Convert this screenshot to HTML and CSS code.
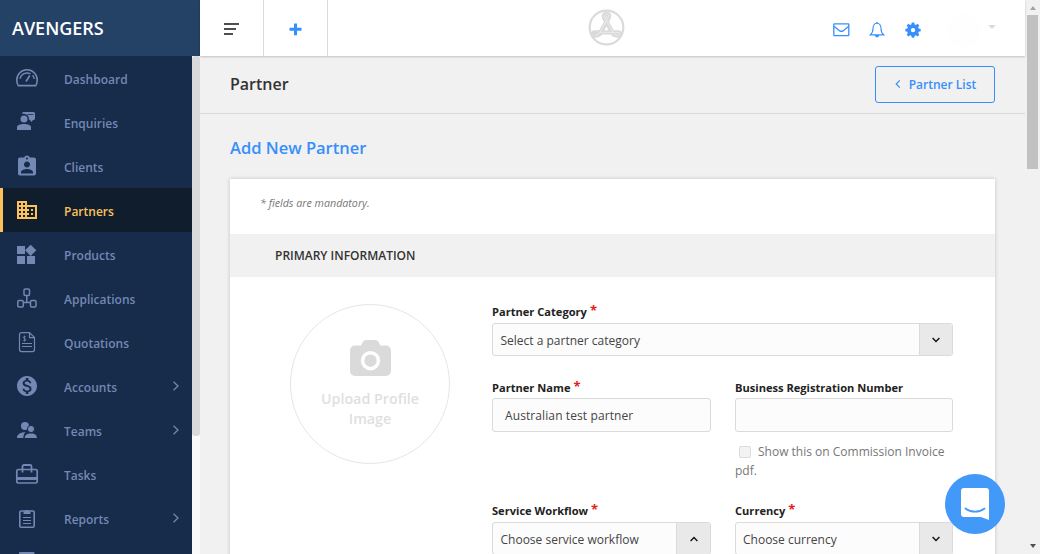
FILE: index.html
```html
<!DOCTYPE html>
<html lang="en">
<head>
<meta charset="utf-8">
<title>Add New Partner</title>
<link rel="stylesheet" href="styles.css">
</head>
<body>
<div class="app">
  <aside class="sidebar">
    <div class="brand">AVENGERS</div>
    <div class="side-body">
      <nav class="nav">
        <a class="nav-item"><svg class="ico line" viewBox="0 0 24 24"><path d="M3.200 19.600C2.200 18.200 1.800 16 1.800 14A10.200 10.200 0 0 1 22.200 14c0 2-.4 4.200-1.400 5.600z" stroke-width="1.600"/><path d="M5 12.800a7.300 7.300 0 0 1 10.500-5M17.600 9.200A7.300 7.300 0 0 1 19.200 13" stroke-width="1.400"/><path d="M11 15.500L14.800 9.500" stroke-width="1.700"/></svg><span>Dashboard</span></a>
        <a class="nav-item"><svg class="ico" viewBox="0 0 24 24"><circle cx="9" cy="9" r="3.500"/><path d="M2 20v-2.600C2 14.800 5.500 14 9 14s7 .8 7 3.400V20z"/><path d="M7.500 2h11a1.500 1.500 0 0 1 1.500 1.500v5A1.500 1.500 0 0 1 18.500 10H18l-1.500 2L14.800 9.800H13.800A5 5 0 0 0 7.500 4z"/><path class="cut" d="M12.500 4.500h6"/></svg><span>Enquiries</span></a>
        <a class="nav-item"><svg class="ico" viewBox="0 -.5 24 24"><path d="M19 3h-4.180C14.400 1.840 13.300 1 12 1s-2.400.84-2.820 2H5c-1.100 0-2 .9-2 2v14c0 1.100.9 2 2 2h14c1.100 0 2-.9 2-2V5c0-1.100-.9-2-2-2zm-7 0c.55 0 1 .45 1 1s-.45 1-1 1-1-.45-1-1 .45-1 1-1zm0 4c1.660 0 3 1.340 3 3s-1.340 3-3 3-3-1.340-3-3 1.340-3 3-3zm6 12H6v-1.400c0-2 4-3.100 6-3.100s6 1.100 6 3.100V19z"/></svg><span>Clients</span></a>
        <a class="nav-item active"><svg class="ico" viewBox="0 0 24 24"><path d="M12 7V3H2v18h20V7H12zM6 19H4v-2h2v2zm0-4H4v-2h2v2zm0-4H4V9h2v2zm0-4H4V5h2v2zm4 12H8v-2h2v2zm0-4H8v-2h2v2zm0-4H8V9h2v2zm0-4H8V5h2v2zm10 12h-8v-2h2v-2h-2v-2h2v-2h-2V9h8v10zm-2-8h-2v2h2v-2zm0 4h-2v2h2v-2z"/></svg><span>Partners</span></a>
        <a class="nav-item"><svg class="ico" viewBox="1 -1 24 24"><path d="M13 13v8h8v-8h-8zM3 21h8v-8H3v8zM3 3v8h8V3H3zm13.660-1.310L11 7.340 16.660 13l5.660-5.660-5.660-5.650z"/></svg><span>Products</span></a>
        <a class="nav-item"><svg class="ico line" viewBox="0 0 24 24"><g stroke-width="1.500"><rect x="9" y="3" width="5.500" height="6.500" rx="1.200"/><rect x="2.800" y="14.500" width="5.500" height="6.500" rx="1.200"/><rect x="15.500" y="14.500" width="5.500" height="6.500" rx="1.200"/><path d="M11.800 9.500v7M8.300 16.500h7.200"/></g></svg><span>Applications</span></a>
        <a class="nav-item"><svg class="ico line" viewBox="0 0 24 24"><path d="M14.500 2.600H6.500a2 2 0 0 0-2 2v15a2 2 0 0 0 2 2h11a2 2 0 0 0 2-2V7.500zv5h5M7 13.500h10M7 16.500h10" stroke-width="1.200"/><path d="M10.800 6.800C10.300 6.200 8.300 6.200 8.200 7.500s2.700.9 2.700 2.200-2.300 1.400-2.900.6M9.500 5.600v6" stroke-width=".8"/></svg><span>Quotations</span></a>
        <a class="nav-item"><svg class="ico" viewBox="0 0 24 24"><path d="M12 2C6.480 2 2 6.480 2 12s4.480 10 10 10 10-4.480 10-10S17.520 2 12 2zm1.410 16.090V20h-2.670v-1.930c-1.710-.36-3.160-1.460-3.270-3.400h1.960c.1 1.050.82 1.870 2.650 1.870 1.960 0 2.400-.98 2.400-1.590 0-.83-.44-1.610-2.670-2.140-2.480-.6-4.180-1.620-4.180-3.670 0-1.720 1.390-2.840 3.110-3.210V4h2.670v1.950c1.860.45 2.790 1.860 2.850 3.390H14.300c-.05-1.110-.64-1.870-2.220-1.870-1.500 0-2.400.68-2.400 1.640 0 .84.65 1.390 2.670 1.910s4.180 1.390 4.180 3.910c-.01 1.830-1.380 2.830-3.120 3.160z"/></svg><span>Accounts</span><svg class="caret" viewBox="0 0 8 10"><path d="M1.500.8L6 5 1.500 9.200"/></svg></a>
        <a class="nav-item"><svg class="ico" viewBox="0 0 24 24"><circle cx="10" cy="8" r="4"/><circle class="ring" cx="16" cy="11" r="3.600"/><path d="M2 20c0-4 4-5.700 8.500-5.700C9 15.600 8.300 17.500 8.300 20zM9.800 20c0-3.300 2.600-4.600 6.200-4.600s6 1.300 6 4.600z"/></svg><span>Teams</span><svg class="caret" viewBox="0 0 8 10"><path d="M1.500.8L6 5 1.500 9.200"/></svg></a>
        <a class="nav-item"><svg class="ico line" viewBox="0 0 24 24"><path d="M3.300 7.500h17.400a1.500 1.500 0 0 1 1.500 1.500v10.500a1.500 1.500 0 0 1-1.500 1.500H3.300a1.500 1.500 0 0 1-1.500-1.500V9a1.500 1.500 0 0 1 1.500-1.500z" stroke-width="1.700"/><path d="M7.500 10.500V4.500a1.500 1.500 0 0 1 1.500-1.500h6a1.500 1.500 0 0 1 1.500 1.500v6" stroke-width="1.800"/><path d="M2 16.500h20" stroke-width="2.900"/></svg><span>Tasks</span></a>
        <a class="nav-item"><svg class="ico line" viewBox="0 0 24 24"><rect x="4.800" y="5" width="14.400" height="16.200" rx="1.300" stroke-width="1.600"/><path d="M8 11.500h8M8 14.500h8M8 17.500h8" stroke-width="1.100"/><path class="solid" d="M8.500 8V5.200h1.700a1.900 1.900 0 0 1 3.600 0h1.700V8z"/></svg><span>Reports</span><svg class="caret" viewBox="0 0 8 10"><path d="M1.500.8L6 5 1.500 9.200"/></svg></a>
        <a class="nav-item"><svg class="ico" viewBox="0 0 24 24"><rect x="4" y="2" width="15.500" height="19" rx="1"/></svg></a>
      </nav>
      <div class="side-scroll"><div class="side-thumb"></div></div>
    </div>
  </aside>

  <main class="main">
    <header class="topbar">
      <div class="tool"><svg class="menu-ico" viewBox="0 0 16 12"><path d="M0 0h15v2H0zM0 5h12v2H0zM0 10h9v2H0z"/></svg></div>
      <div class="tool"><svg class="plus-ico" viewBox="0 0 13 13"><path d="M5 .5h3v4.300h4.500v3H8v4.400H5V7.800H.5v-3H5z"/></svg></div>
      <div class="logo"><svg viewBox="0 0 38 38"><g fill="none" stroke="#dadada" stroke-linecap="round" stroke-linejoin="round"><circle cx="19" cy="19" r="17.300" stroke-width="2.200"/><path stroke-width="4.600" d="M17 9.500C15.500 6.500 16.500 5 19 5s3.500 1.500 2 4.500L13 24c-1.500 2.700-3 3.300-5.500 3.300-3.500 0-3.500-3.300-.5-3.300h24c3 0 3 3.300-.5 3.300-2.500 0-4-.6-5.500-3.300z"/><path stroke="#f2f2f2" stroke-width=".7" d="M17.400 9C16 6.200 17 5.200 19 5.200s3 1 1.600 3.800L12.500 23.600c-1.500 2.700-2.800 3.400-5 3.400M12 24h19c2 0 2.300 3-.5 3-2.300 0-3.700-.7-5-3.400L17.400 9"/></g></svg></div>
      <div class="actions">
        <svg class="mail" viewBox="0 0 17 14"><rect x=".8" y=".9" width="15" height="11.800" rx=".6"/><path d="M1 3.200l5.800 4.700q1.600 1.100 3.200 0l5.700-4.700"/></svg>
        <svg class="bell" viewBox="0 0 16 16"><path d="M8 1.300C5 1.300 4 4 4 6.500S3.500 11 1.300 12.900h13.400C12.500 11 12 9 12 6.500S11 1.300 8 1.300z"/><path class="fill" d="M7.300 0h1.400v1.600H7.300zM5.800 13h4.400c-.2 1.600-1.200 2.400-2.200 2.400S6 14.600 5.800 13z"/></svg>
        <svg class="gear" viewBox="0 0 16 16"><path fill-rule="evenodd" d="M6.800.4h2.400l.5 2 1.100.5 1.800-1.100 1.700 1.700-1.100 1.800.5 1.100 2 .5v2.400l-2 .5-.5 1.100 1.100 1.800-1.700 1.700-1.800-1.100-1.100.5-.5 2H6.800l-.5-2-1.100-.5-1.800 1.100-1.700-1.700 1.100-1.800-.5-1.100-2-.5V6.900l2-.5.5-1.100-1.100-1.800 1.700-1.700 1.800 1.100 1.100-.5zM8 5.900a2.200 2.200 0 1 0 0 4.400 2.200 2.200 0 0 0 0-4.400z"/></svg>
        <span class="avatar"></span><span class="drop"></span>
      </div>
    </header>
    <section class="titlebar">
      <h1>Partner</h1>
      <a class="back"><svg viewBox="0 0 6 8"><path d="M4.800.4L1.200 4l3.600 3.600"/></svg>Partner List</a>
    </section>
    <section class="content">
      <h2>Add New Partner</h2>
      <div class="card">
        <p class="note">* fields are mandatory.</p>
        <h3>PRIMARY INFORMATION</h3>
        <div class="form">
          <div class="upload">
            <svg viewBox="0 0 41 36"><path fill-rule="evenodd" d="M11 5.500L13 1.800Q14 0 16 0h9.500q2 0 3 1.800l1.800 3.700H36a5 5 0 0 1 5 5V31a5 5 0 0 1-5 5H5a5 5 0 0 1-5-5V10.500a5 5 0 0 1 5-5zM20.500 11a9.700 9.700 0 1 0 0 19.400 9.700 9.700 0 0 0 0-19.400z"/><circle cx="20.500" cy="20.700" r="6.200"/></svg>
            <span>Upload Profile<br>Image</span>
          </div>
          <div class="fields">
            <div class="field wide"><label class="raised">Partner Category<i>*</i></label><div class="select"><span>Select a partner category</span><b><svg viewBox="0 0 8 6"><path d="M.6 1L4 4.400 7.400 1"/></svg></b></div></div>
            <div class="field"><label>Partner Name<i>*</i></label><div class="input">Australian test partner</div></div>
            <div class="field"><label>Business Registration Number</label><div class="input"></div><p class="check"><span class="box"></span>Show this on Commission Invoice pdf.</p></div>
            <div class="field"><label class="raised">Service Workflow<i>*</i></label><div class="select open"><span>Choose service workflow</span><b><svg viewBox="0 0 8 6"><path d="M.6 5L4 1.600 7.400 5"/></svg></b></div></div>
            <div class="field"><label class="raised">Currency<i>*</i></label><div class="select tight"><span>Choose currency</span><b><svg viewBox="0 0 8 6"><path d="M.6 1L4 4.400 7.400 1"/></svg></b></div></div>
          </div>
        </div>
      </div>
    </section>
  </main>

  <div class="page-scroll"><span class="arrow up"></span><span class="page-thumb"></span><span class="arrow down"></span></div>
  <div class="chat"><svg viewBox="0 0 28 32"><path class="bubble" d="M3 0h22a3 3 0 0 1 3 3v29l-8-3H3a3 3 0 0 1-3-3V3a3 3 0 0 1 3-3z"/><path class="smile" d="M4.500 20.500c5.500 4.300 13.500 4.300 19 0"/></svg></div>
</div>
</body>
</html>
```
FILE: styles.css
```css
* { box-sizing: border-box; }
body { margin: 0; font-family: "Open Sans", "Noto Sans", sans-serif; }
h1, h2, h3, p { margin: 0; }
svg { display: block; flex: none; }

.app { display: flex; width: 1040px; height: 554px; overflow: hidden; background: #f1f1f1; }

/* Sidebar */
.sidebar { display: flex; flex-direction: column; flex: none; width: 200px; height: 554px; background: #172b4a; }
.brand { flex: none; height: 56px; padding-left: 12px; line-height: 56px; background: #244166; color: #fff; font-size: 18px; font-weight: 600; }
.side-body { display: flex; flex: 1; min-height: 0; }
.nav { width: 192px; overflow: hidden; }
.nav-item { display: flex; align-items: center; height: 44px; padding: 0 12px 0 15px; color: #7388b3; font-size: 12px; font-weight: 600; }
.nav-item span { flex: 1; padding: 3px 0 0 25px; }
.nav-item.active { padding-left: 12px; border-left: 3px solid #fcc15c; background: #101d2c; color: #fcc15c; }
.ico { width: 24px; height: 24px; fill: currentColor; }
.ico.line { fill: none; stroke: currentColor; }
.ico .cut { fill: none; stroke: #172b4a; stroke-width: .8; }
.ico .ring { stroke: #172b4a; stroke-width: 1; }
.ico .solid { fill: currentColor; stroke: none; }
.caret { width: 8px; height: 10px; fill: none; stroke: currentColor; stroke-width: 1.3; }
.side-scroll { width: 8px; background: #fafafa; }
.side-thumb { height: 380px; border-radius: 3px; background: #dadada; }

/* Top bar */
.main { flex: none; width: 825px; }
.topbar { position: relative; display: flex; height: 56px; background: #fff; box-shadow: 0 1px 2px rgba(0, 0, 0, .2); }
.tool { display: flex; align-items: center; justify-content: center; width: 64px; border-right: 1px solid #dadada; }
.menu-ico { width: 16px; height: 12px; margin-top: 2px; fill: #4e4e4e; }
.plus-ico { width: 13px; height: 13px; margin-top: 2px; fill: #378ffb; }
.logo { flex: 1; padding: 9px 0 0 260px; }
.logo svg { width: 37px; height: 37px; }
.actions { display: flex; align-items: center; padding: 3px 29px 0 0; }
.actions svg { fill: none; stroke: #378ffb; stroke-width: 1.3; }
.mail { width: 17px; height: 14px; }
.bell { width: 16px; height: 16px; margin-left: 19px; }
.actions .bell { stroke-width: 1.1; }
.bell .fill { fill: #378ffb; stroke: none; }
.actions .gear { width: 16px; height: 16px; margin-left: 20px; fill: #378ffb; stroke: none; }
.avatar { width: 34px; height: 34px; margin-left: 26px; border-radius: 50%; background: #fefefe; }
.drop { margin: -5px 0 0 7px; border: 4px solid transparent; border-top-color: #dadada; border-bottom: 0; }

/* Page title */
.titlebar { display: flex; align-items: center; justify-content: space-between; height: 58px; padding: 0 30px; border-bottom: 1px solid #d9d9d9; }
h1 { margin-top: -2px; color: #333; font-size: 16px; font-weight: 600; }
.back { display: flex; align-items: center; justify-content: center; gap: 8px; width: 120px; height: 37px; margin-top: -1px; padding-left: 1px; border: 1px solid #378ffb; border-radius: 3px; color: #378ffb; font-size: 12px; font-weight: 600; }
.back svg { width: 6px; height: 8px; fill: none; stroke: #378ffb; stroke-width: 1.2; }

/* Form card */
.content { padding: 22px 30px 0; }
h2 { height: 43px; line-height: 23px; color: #378ffb; font-size: 16.5px; font-weight: 600; }
.card { height: 500px; background: #fff; box-shadow: 0 0 4px rgba(0, 0, 0, .2); }
.note { height: 55px; padding: 16px 0 0 30px; line-height: 17px; color: #777; font-size: 10.7px; font-style: italic; }
h3 { height: 43px; padding-left: 45px; line-height: 43px; background: #f1f1f1; color: #333; font-size: 12px; font-weight: 600; }
.form { display: flex; gap: 42px; padding: 27px 42px 0 60px; }
.upload { display: flex; flex-direction: column; align-items: center; flex: none; width: 160px; height: 160px; padding-top: 35px; border: 1px solid #e6e6e6; border-radius: 50%; color: #dfdfdf; font-size: 14.3px; font-weight: 600; line-height: 20px; text-align: center; }
.upload svg { width: 41px; height: 36px; margin-bottom: 13px; fill: #dadada; }
.fields { display: grid; grid-template-columns: 219px 218px; grid-template-rows: 75px 124px 80px; column-gap: 24px; }
.wide { grid-column: span 2; }
label { display: block; height: 19px; line-height: 17px; color: #222; font-size: 11.1px; font-weight: 700; }
label.raised { line-height: 15px; }
label i { margin-left: 3px; color: #e51c1c; font-size: 13px; font-style: normal; line-height: 10px; vertical-align: 1px; }
.select { display: flex; height: 33px; border: 1px solid #dadada; border-radius: 3px; background: #fcfcfc; color: #444; font-size: 12px; line-height: 34px; }
.select span { flex: 1; padding-left: 7.5px; }
.select b { display: flex; align-items: center; justify-content: center; width: 33px; border-left: 1px solid #dadada; background: #e9e9e9; }
.select svg { width: 8px; height: 6px; fill: none; stroke: #111; stroke-width: 1.4; }
.select.open b { width: 34px; }
.select.tight span { padding-left: 7px; }
.input { height: 34px; padding-left: 12px; border: 1px solid #dadada; border-radius: 3px; background: #fcfcfc; color: #444; font-size: 12px; letter-spacing: .1px; line-height: 34px; }
.check { margin-top: 10px; color: #777; font-size: 12px; line-height: 19px; }
.box { display: inline-block; width: 12px; height: 12px; margin: 0 7px 0 4px; border: 1px solid #dcdcdc; border-radius: 2px; background: #f3f3f3; vertical-align: -2px; }

/* Window scrollbar */
.page-scroll { display: flex; flex-direction: column; align-items: center; flex: none; width: 15px; height: 554px; background: #f1f1f1; }
.page-thumb { width: 11px; height: 154px; margin: 5px 0 auto; background: #c1c1c1; }
.arrow { border: 3.5px solid transparent; }
.arrow.up { margin-top: 6px; border-top: 0; border-bottom: 4px solid #a3a3a3; }
.arrow.down { margin-bottom: 6px; border-bottom: 0; border-top: 4px solid #505050; }

/* Chat launcher floats above the page */
.chat { position: absolute; left: 945px; top: 474px; display: flex; align-items: center; justify-content: center; width: 60px; height: 60px; border-radius: 50%; background: #4299f8; }
.chat svg { width: 28px; height: 32px; }
.bubble { fill: #fff; }
.smile { fill: none; stroke: #4299f8; stroke-width: 1.8; stroke-linecap: round; }
```
